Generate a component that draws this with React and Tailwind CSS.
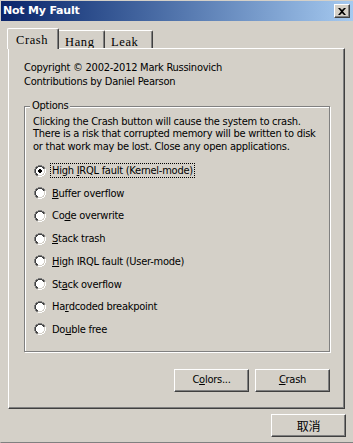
import React, { useState } from 'react';

const FACE = '#D4D0C8';

// Win2000-style radio bullet
const Radio = ({ checked }) => (
  <svg width="12" height="12" viewBox="0 0 12 12" className="shrink-0">
    <path d="M4 0h4v1h2v1h1v2h1v4h-1v2h-1v1h-2v1h-4v-1h-2v-1h-1v-2h-1v-4h1v-2h1v-1h2z" fill="#808080" />
    <path d="M4 1h4v1h2v2h1v4h-1v2h-2v1h-4v-1h-2v-2h-1v-4h1v-2h2z" fill="#404040" />
    <path d="M11 4h1v4h-1v2h-1v1h-2v1h-4v-1h4v-1h2v-2h1z" fill="#ffffff" />
    <path d="M10 4h1v4h-1v2h-2v1h-4v-1h4v-1h1v-1h1z" fill={FACE} />
    <path d="M4 2h4v1h1v1h1v4h-1v1h-1v1h-4v-1h-1v-1h-1v-4h1v-1h1z" fill="#ffffff" />
    {checked && <path d="M5 4h2v1h1v2h-1v1h-2v-1h-1v-2h1z" fill="#000000" />}
  </svg>
);

const Button = ({ children, className = '' }) => (
  <div
    className={`h-[23px] w-[75px] flex items-center justify-center bg-[#D4D0C8] border border-t-white border-l-white border-r-[#404040] border-b-[#404040] shadow-[inset_-1px_-1px_0_#808080] text-black ${className}`}
  >
    {children}
  </div>
);

const options = [
  ['High ', 'I', 'RQL fault (Kernel-mode)'],
  ['', 'B', 'uffer overflow'],
  ['Co', 'd', 'e overwrite'],
  ['', 'S', 'tack trash'],
  ['', 'H', 'igh IRQL fault (User-mode)'],
  ['St', 'a', 'ck overflow'],
  ['Ha', 'r', 'dcoded breakpoint'],
  ['Do', 'u', 'ble free'],
];

export default function App() {
  const [selected, setSelected] = useState(0);

  return (
    <div className="w-[353px] h-[443px] bg-[#D4D0C8] flex flex-col border-t border-l border-t-[#D4D0C8] border-l-[#D4D0C8] border-b border-b-[#808080] text-[11px] tracking-[-0.25px] text-black font-[family-name:'DejaVu_Sans_Condensed','DejaVu_Sans',sans-serif] overflow-hidden whitespace-nowrap">
      {/* title bar */}
      <div className="h-[20px] flex items-center justify-between pl-[2px] pr-[2px] bg-gradient-to-r from-[#0A246A] to-[#A6CAF0]">
        <span className="text-white font-bold text-[11px] font-[family-name:'DejaVu_Sans',sans-serif] tracking-[-0.2px]">Not My Fault</span>
        <div className="w-[16px] h-[14px] mr-[1px] bg-[#D4D0C8] border border-t-white border-l-white border-r-[#404040] border-b-[#404040] shadow-[inset_-1px_-1px_0_#808080] flex items-center justify-center">
          <svg width="8" height="7" viewBox="0 0 8 7">
            <path d="M0 0h2l2 2 2-2h2l-3 3.5 3 3.5h-2l-2-2-2 2h-2l3-3.5z" fill="#000" />
          </svg>
        </div>
      </div>

      {/* tabs */}
      <div className="flex items-end pl-[6px] pt-[6px] h-[27px] font-[family-name:'Liberation_Serif',serif] text-[12.5px] tracking-[0.6px]">
        <div className="relative z-10 h-[21px] w-[52px] -mb-[1px] bg-[#D4D0C8] border-t border-l border-t-white border-l-white border-r border-r-[#404040] rounded-t-[2px] shadow-[inset_-1px_0_0_#808080] flex items-start pl-[8px] pt-[2px]">
          Crash
        </div>
        <div className="h-[18px] w-[46px] bg-[#D4D0C8] border-t border-t-white border-r border-r-[#404040] shadow-[inset_-1px_0_0_#808080] rounded-tr-[2px] flex items-start pl-[6px] pt-[2px]">
          Hang
        </div>
        <div className="h-[18px] w-[48px] bg-[#D4D0C8] border-t border-t-white border-r border-r-[#404040] shadow-[inset_-1px_0_0_#808080] rounded-tr-[2px] flex items-start pl-[6px] pt-[2px]">
          Leak
        </div>
      </div>

      {/* tab panel */}
      <div className="ml-[7px] w-[337px] h-[361px] border border-t-white border-l-white border-r-[#404040] border-b-[#404040] shadow-[inset_-1px_-1px_0_#808080] pl-[15px] pr-[15px] pt-[12px] flex flex-col">
        <div className="leading-[14px]">
          <div>Copyright © 2002-2012 Mark Russinovich</div>
          <div>Contributions by Daniel Pearson</div>
        </div>

        {/* group box */}
        <div className="relative mt-[17px] w-[306px] h-[246px] border border-[#808080] shadow-[inset_1px_1px_0_white,1px_1px_0_white] pl-[8px] pt-[8px]">
          <span className="absolute -top-[8px] left-[5px] bg-[#D4D0C8] px-[2px] leading-[14px]">Options</span>
          <div className="leading-[12.4px] pt-[1px]">
            <div>Clicking the Crash button will cause the system to crash.</div>
            <div>There is a risk that corrupted memory will be written to disk</div>
            <div>or that work may be lost. Close any open applications.</div>
          </div>
          <div className="flex flex-col mt-[6px]">
            {options.map(([a, u, b], i) => (
              <div
                key={i}
                onClick={() => setSelected(i)}
                className="h-[22.7px] flex items-center gap-[5px] pl-[1px]"
              >
                <Radio checked={selected === i} />
                <span
                  className={`leading-[13px] px-[1px] ${
                    i === 0 ? 'outline outline-1 outline-dotted outline-black' : ''
                  }`}
                >
                  {a}
                  <span className="underline underline-offset-[1px]">{u}</span>
                  {b}
                </span>
              </div>
            ))}
          </div>
        </div>

        <div className="flex justify-end gap-[6px] mt-[17px] mr-[-1px]">
          <Button>
            C<span className="underline">o</span>lors...
          </Button>
          <Button>
            <span className="underline">C</span>rash
          </Button>
        </div>
      </div>

      <div className="flex justify-end pr-[7px] mt-[5px]">
        <Button className="h-[22px] text-[12px] font-[family-name:'Noto_Sans_CJK_SC',sans-serif]">取消</Button>
      </div>
    </div>
  );
}
